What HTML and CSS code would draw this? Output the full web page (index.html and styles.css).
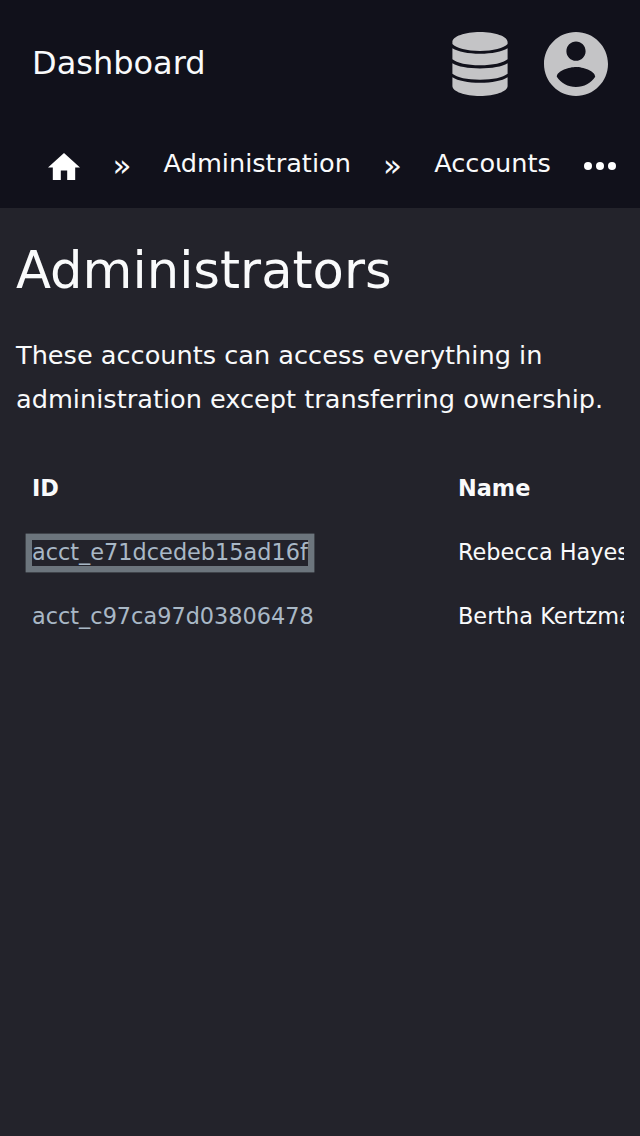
FILE: index.html
```html
<!DOCTYPE html>
<html lang="en">
<head>
<meta charset="utf-8">
<title>Administrators</title>
<link rel="stylesheet" href="styles.css">
</head>
<body>
<header class="header">
  <div class="topbar">
    <a class="brand">Dashboard</a>
    <div class="menus">
      <svg class="icon-database" viewBox="0 0 56 64"><path d="M.4 10C.4 4.400 13 0 28 0s27.600 4.400 27.600 10v2C52 16 41 18.900 28 18.900S4 16 .4 12zM.4 16.200C6 19.600 16 21.700 28 21.700s22-2.100 27.600-5.500v11C51 31 41 33.200 28 33.200S5 31 .4 27.200zM.4 31.200C6 34.600 16 36.400 28 36.400s22-1.800 27.600-5.200v10.600C51 45.600 41 47.700 28 47.700S5 45.600.4 41.800zM.4 45.200C6 48.800 16 50.700 28 50.700s22-1.900 27.600-5.500V54C55.600 59.600 43 64 28 64S.4 59.600.4 54z"/></svg>
      <svg class="icon-account" viewBox="2 2 20 20"><path d="M12 2C6.480 2 2 6.480 2 12s4.480 10 10 10 10-4.480 10-10S17.520 2 12 2zm0 3c1.660 0 3 1.340 3 3s-1.340 3-3 3-3-1.340-3-3 1.340-3 3-3zm0 14.200c-2.500 0-4.710-1.280-6-3.220.030-1.990 4-3.080 6-3.080 1.990 0 5.970 1.090 6 3.080-1.290 1.940-3.500 3.220-6 3.220z"/></svg>
    </div>
  </div>
  <nav class="crumbs">
    <svg class="icon-home" viewBox="2 3 20 17"><path d="M10 20v-6h4v6h5v-8h3L12 3 2 12h3v8z"/></svg>
    <span class="sep">»</span>
    <a class="crumb crumb-admin">Administration</a>
    <span class="sep">»</span>
    <a class="crumb crumb-accounts">Accounts</a>
    <svg class="icon-more" viewBox="0 0 32 8"><circle cx="4" cy="4" r="4"/><circle cx="16" cy="4" r="4"/><circle cx="28" cy="4" r="4"/></svg>
  </nav>
</header>
<main class="content">
  <h1 class="title">Administrators</h1>
  <p class="intro">These accounts can access everything in administration except transferring ownership.</p>
  <div class="table">
    <div class="row head"><span>ID</span><span>Name</span></div>
    <div class="row"><span><a class="link focused">acct_e71dcedeb15ad16f</a></span><span>Rebecca Hayes</span></div>
    <div class="row"><span><a class="link">acct_c97ca97d03806478</a></span><span>Bertha Kertzmann</span></div>
  </div>
</main>
</body>
</html>
```
FILE: styles.css
```css
* { box-sizing: border-box; }
body { margin: 0; height: 1136px; overflow: hidden; background: #23232b; color: #f9fafb; font-family: "DejaVu Sans", sans-serif; }
.header { height: 208px; background: #11111b; }
.topbar { display: flex; height: 128px; padding: 0 32px; align-items: center; justify-content: space-between; }
.brand { font-size: 32px; line-height: 48px; margin-top: -2px; }
.menus { display: flex; gap: 36px; fill: #c4c4c6; }
.icon-database { width: 56px; height: 64px; }
.icon-account { width: 64px; height: 64px; }
.crumbs { display: flex; height: 80px; padding: 0 24px 0 48px; font-size: 25.6px; line-height: 40px; fill: #fff; }
.crumbs svg { flex: none; }
.icon-home { width: 32px; height: 27.200px; margin: 24.600px 32px 0 0; }
.sep { width: 20px; margin-right: 31.600px; padding: 17px 0 0 .4px; font-size: 31px; }
.crumb { padding-top: 15px; white-space: nowrap; }
.crumb-admin { width: 219px; }
.crumb-accounts { flex: 1; }
.icon-more { width: 32px; height: 8px; margin-top: 34px; }
.content { padding: 32px 16px 0; }
.title { margin: 0; font-size: 51.2px; font-weight: 400; line-height: 60px; }
.intro { margin: 33px 0 0; font-size: 25.6px; line-height: 44px; }
.table { margin-top: 35px; overflow: hidden; }
.row { display: grid; grid-template-columns: 426px 400px; height: 64px; padding-left: 16px; align-items: center; font-size: 22.4px; white-space: nowrap; }
.head { font-weight: 700; }
.link { display: block; width: fit-content; height: 26px; margin-top: 2px; line-height: 24px; color: #a9b8c6; }
.focused { box-shadow: 0 0 0 6.400px #6c757d; }
```
